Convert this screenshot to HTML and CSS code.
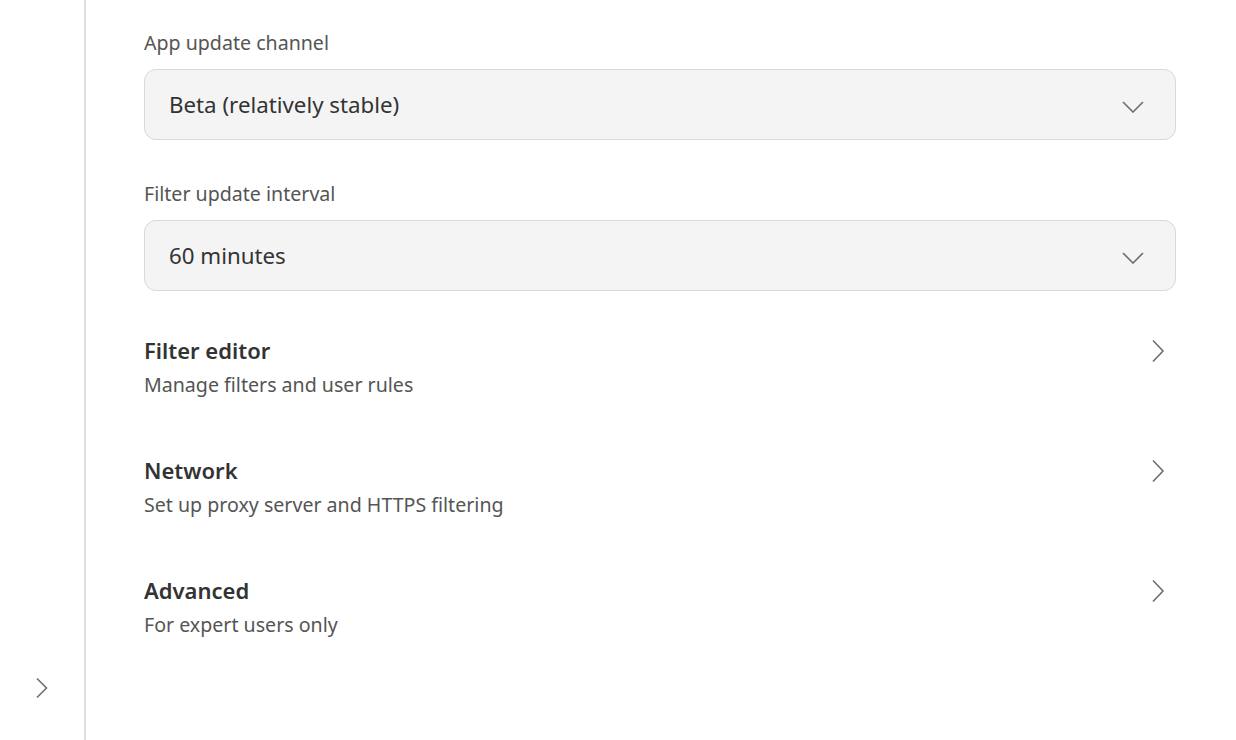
FILE: index.html
```html
<!DOCTYPE html>
<html>
<head>
<meta charset="utf-8">
<link rel="stylesheet" href="styles.css">
</head>
<body>
<div class="app">
  <aside class="sidebar">
    <button class="expand" aria-label="Expand">
      <svg width="14" height="22" viewBox="0 0 14 22"><path d="M2 1.5 L11.5 11 L2 20.5" fill="none" stroke="#6e6e6e" stroke-width="1.6"/></svg>
    </button>
  </aside>
  <main class="content">
    <div class="field">
      <div class="label">App update channel</div>
      <div class="select">
        <span>Beta (relatively stable)</span>
        <svg class="chev-down" width="22" height="12" viewBox="0 0 22 12"><path d="M1 1 L11 11 L21 1" fill="none" stroke="#6e6e6e" stroke-width="1.6"/></svg>
      </div>
    </div>
    <div class="field">
      <div class="label">Filter update interval</div>
      <div class="select">
        <span>60 minutes</span>
        <svg class="chev-down" width="22" height="12" viewBox="0 0 22 12"><path d="M1 1 L11 11 L21 1" fill="none" stroke="#6e6e6e" stroke-width="1.6"/></svg>
      </div>
    </div>
    <div class="links">
      <div class="link">
        <div class="text">
          <div class="title">Filter editor</div>
          <div class="sub">Manage filters and user rules</div>
        </div>
        <svg class="chev-right" width="14" height="24" viewBox="0 0 14 24"><path d="M2 1.5 L12 12 L2 22.5" fill="none" stroke="#6e6e6e" stroke-width="1.6"/></svg>
      </div>
      <div class="link">
        <div class="text">
          <div class="title">Network</div>
          <div class="sub">Set up proxy server and HTTPS filtering</div>
        </div>
        <svg class="chev-right" width="14" height="24" viewBox="0 0 14 24"><path d="M2 1.5 L12 12 L2 22.5" fill="none" stroke="#6e6e6e" stroke-width="1.6"/></svg>
      </div>
      <div class="link">
        <div class="text">
          <div class="title">Advanced</div>
          <div class="sub">For expert users only</div>
        </div>
        <svg class="chev-right" width="14" height="24" viewBox="0 0 14 24"><path d="M2 1.5 L12 12 L2 22.5" fill="none" stroke="#6e6e6e" stroke-width="1.6"/></svg>
      </div>
    </div>
  </main>
</div>
</body>
</html>
```
FILE: styles.css
```css
html, body {
  margin: 0;
  padding: 0;
  background: #ffffff;
  font-family: "Noto Sans", "Open Sans", sans-serif;
  color: #333333;
}
.app {
  display: flex;
  height: 740px;
}
.sidebar {
  width: 86px;
  border-right: 2px solid #dedede;
  display: flex;
  flex-direction: column;
  justify-content: flex-end;
  align-items: center;
  padding-bottom: 41px;
  box-sizing: border-box;
  flex-shrink: 0;
}
.expand {
  background: none;
  border: none;
  padding: 0;
  display: flex;
}
.content {
  flex: 1;
  padding: 30px 60px 0 58px;
  display: flex;
  flex-direction: column;
}
.field {
  display: flex;
  flex-direction: column;
  margin-bottom: 41px;
}
.label {
  font-size: 19.6px;
  line-height: 26px;
  color: #555555;
  margin-bottom: 13px;
}
.select {
  height: 71px;
  box-sizing: border-box;
  border: 1.5px solid #d9d9d9;
  border-radius: 12px;
  background: #f4f4f4;
  display: flex;
  align-items: center;
  justify-content: space-between;
  padding: 0 31px 0 24px;
  font-size: 22.3px;
  color: #333333;
}
.chev-down {
  margin-top: 4px;
}
.links {
  display: flex;
  flex-direction: column;
  gap: 50px;
  margin-top: 2px;
}
.link {
  display: flex;
  align-items: flex-start;
  justify-content: space-between;
  padding-right: 11px;
}
.title {
  font-size: 22px;
  font-weight: 600;
  line-height: 32px;
  color: #333333;
}
.sub {
  font-size: 19.6px;
  line-height: 38px;
  color: #555555;
}
.chev-right {
  margin-top: 5px;
}
```
